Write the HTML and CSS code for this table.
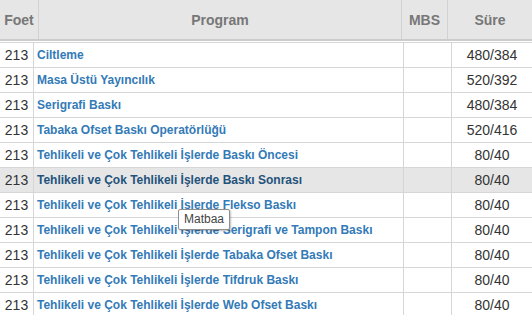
FILE: index.html
```html
<!DOCTYPE html>
<html lang="tr">
<head>
    <meta charset="UTF-8">
    <meta name="viewport" content="width=device-width, initial-scale=1.0">
    <title>Programlar</title>
    <link rel="stylesheet" href="styles.css">
</head>
<body>
    <div class="grid-wrap">
        <table class="grid-head">
            <colgroup>
                <col class="h-foet">
                <col class="h-program">
                <col class="h-mbs">
                <col class="h-sure">
            </colgroup>
            <tr>
                <th>Foet</th>
                <th>Program</th>
                <th>MBS</th>
                <th>Süre</th>
            </tr>
        </table>

        <table class="grid-body">
            <colgroup>
                <col class="b-foet">
                <col class="b-program">
                <col class="b-mbs">
                <col class="b-sure">
            </colgroup>
            <tr>
                <td class="num">213</td>
                <td class="prog"><a href="#">Ciltleme</a></td>
                <td></td>
                <td class="num">480/384</td>
            </tr>
            <tr>
                <td class="num">213</td>
                <td class="prog"><a href="#">Masa Üstü Yayıncılık</a></td>
                <td></td>
                <td class="num">520/392</td>
            </tr>
            <tr>
                <td class="num">213</td>
                <td class="prog"><a href="#">Serigrafi Baskı</a></td>
                <td></td>
                <td class="num">480/384</td>
            </tr>
            <tr>
                <td class="num">213</td>
                <td class="prog"><a href="#">Tabaka Ofset Baskı Operatörlüğü</a></td>
                <td></td>
                <td class="num">520/416</td>
            </tr>
            <tr>
                <td class="num">213</td>
                <td class="prog"><a href="#">Tehlikeli ve Çok Tehlikeli İşlerde Baskı Öncesi</a></td>
                <td></td>
                <td class="num">80/40</td>
            </tr>
            <tr class="hover">
                <td class="num">213</td>
                <td class="prog"><a href="#">Tehlikeli ve Çok Tehlikeli İşlerde Baskı Sonrası</a></td>
                <td></td>
                <td class="num">80/40</td>
            </tr>
            <tr>
                <td class="num">213</td>
                <td class="prog"><a href="#">Tehlikeli ve Çok Tehlikeli İşlerde Flekso Baskı</a></td>
                <td></td>
                <td class="num">80/40</td>
            </tr>
            <tr>
                <td class="num">213</td>
                <td class="prog"><a href="#">Tehlikeli ve Çok Tehlikeli İşlerde Serigrafi ve Tampon Baskı</a></td>
                <td></td>
                <td class="num">80/40</td>
            </tr>
            <tr>
                <td class="num">213</td>
                <td class="prog"><a href="#">Tehlikeli ve Çok Tehlikeli İşlerde Tabaka Ofset Baskı</a></td>
                <td></td>
                <td class="num">80/40</td>
            </tr>
            <tr>
                <td class="num">213</td>
                <td class="prog"><a href="#">Tehlikeli ve Çok Tehlikeli İşlerde Tifdruk Baskı</a></td>
                <td></td>
                <td class="num">80/40</td>
            </tr>
            <tr>
                <td class="num">213</td>
                <td class="prog"><a href="#">Tehlikeli ve Çok Tehlikeli İşlerde Web Ofset Baskı</a></td>
                <td></td>
                <td class="num">80/40</td>
            </tr>
        </table>

        <div class="tooltip">Matbaa</div>
    </div>
</body>
</html>
```

FILE: styles.css
```css
body {
    font-family: "Liberation Sans", Arial, sans-serif;
    background-color: #ffffff;
    margin: 0;
    padding: 0;
    overflow: hidden;
}
.grid-wrap {
    position: relative;
    width: 532px;
}
table {
    width: 532px;
    table-layout: fixed;
    border-collapse: separate;
    border-spacing: 0;
}

/* header */
.grid-head {
    background-color: #e6e6e6;
    border-bottom: 2px solid #cccccc;
}
.h-foet { width: 39px; }
.h-program { width: 363px; }
.h-mbs { width: 46px; }
.h-sure { width: 84px; }
.grid-head th {
    height: 39px;
    padding: 0;
    font-size: 14px;
    font-weight: bold;
    color: #777777;
    text-align: center;
    border-right: 1px solid #d2d2d2;
}
.grid-head th:last-child {
    border-right: none;
}

/* body */
.grid-body {
    margin-top: 1px;
    border-top: 1px solid #d6d6d6;
}
.b-foet { width: 34px; }
.b-program { width: 370px; }
.b-mbs { width: 48px; }
.b-sure { width: 80px; }
.grid-body td {
    height: 23px;
    padding: 1px 0 0 0;
    font-size: 12px;
    line-height: 23px;
    border-right: 1px solid #d6d6d6;
    border-bottom: 1px solid #d6d6d6;
    white-space: nowrap;
    overflow: hidden;
}
.grid-body td:last-child {
    border-right: none;
}
.grid-body .num {
    font-size: 14px;
    color: #333333;
    text-align: center;
}
.grid-body .prog {
    padding-left: 3px;
}
.grid-body .prog a {
    font-weight: bold;
    color: #337ab7;
    text-decoration: none;
}
.grid-body tr.hover td {
    background-color: #e6e6e6;
}
.grid-body tr.hover .prog a {
    color: #23527c;
}

/* tooltip over the rows */
.tooltip {
    position: absolute;
    left: 178px;
    top: 209px;
    padding: 2px 5px 3px 5px;
    font-size: 12px;
    color: #444444;
    background-color: #ffffff;
    border: 1px solid #8f8f8f;
    border-radius: 2px;
    box-shadow: 1px 1px 2px rgba(0, 0, 0, 0.25);
}
```
